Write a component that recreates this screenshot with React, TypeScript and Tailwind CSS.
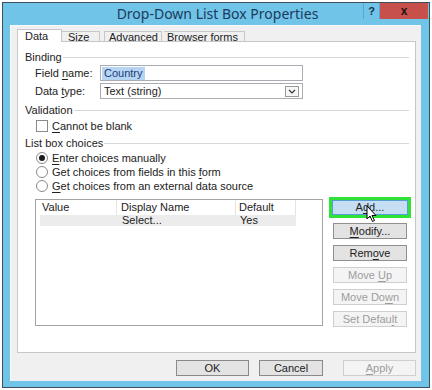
import React from "react";

const font = { fontFamily: '"Liberation Sans", Arial, sans-serif' };
const titleFont = { fontFamily: '"Noto Sans", "Open Sans", sans-serif' };

function U({ children }: { children: React.ReactNode }) {
  return <span className="underline underline-offset-2">{children}</span>;
}

function Section({ title }: { title: string }) {
  return (
    <div className="flex h-[14px] items-center pl-[7px] pr-[6px]">
      <span className="text-[11px] leading-none text-[#222]">{title}</span>
      <div className="ml-[1px] h-px flex-1 bg-[#d5d9dc]" />
    </div>
  );
}

function Radio({ checked, children }: { checked?: boolean; children: React.ReactNode }) {
  return (
    <div className="flex h-[14px] items-center pl-[18px]">
      <div className="flex h-[12px] w-[12px] items-center justify-center rounded-full border border-[#8a8a8a] bg-white">
        {checked && <div className="h-[6px] w-[6px] rounded-full bg-[#1a1a1a]" />}
      </div>
      <span className="ml-[4px] text-[11px] leading-none text-[#222]">{children}</span>
    </div>
  );
}

function SideButton({ children, disabled }: { children: React.ReactNode; disabled?: boolean }) {
  return (
    <div
      className={
        "flex h-[16px] w-[74px] items-center justify-center border text-[11px] leading-none " +
        (disabled
          ? "border-[#cfcfcf] bg-[#f4f4f4] text-[#9d9d9d]"
          : "border-[#8f8f8f] bg-[#e3e3e3] text-[#222]")
      }
    >
      {children}
    </div>
  );
}

export default function App() {
  return (
    <div className="h-[390px] w-[432px] bg-white pl-[2px] pt-[2px]" style={font}>
      <div className="flex h-[386px] w-[428px] flex-col border border-[#3e4f5c] bg-[#6fc4e8] pl-[7px] pr-[8px] pb-[6px]">
        {/* title bar */}
        <div className="relative flex h-[22px] items-center justify-center">
          <span className="pl-[4px] text-[14px] leading-none text-[#1d3a5c]" style={titleFont}>
            Drop-Down List Box Properties
          </span>
          <div className="absolute right-[-7px] top-0 flex h-[16px]">
            <div className="flex w-[17px] items-center justify-center border-x border-[#5aa8cf] text-[11px] font-bold text-[#1d2f4a]">
              ?
            </div>
            <div className="flex w-[48px] items-center justify-center bg-[#c8504b] text-[12px] font-bold text-[#1d1414]">
              x
            </div>
          </div>
        </div>

        {/* body */}
        <div className="flex flex-1 flex-col border-l border-t border-[#fafafa] bg-[#f0f0f0] pl-[6px] pr-[5px] pt-[3px]">
          {/* tabs */}
          <div className="flex h-[13px] items-end text-[11px] leading-none text-[#222]">
            <div className="relative z-10 flex h-[13px] w-[45px] items-center border-x border-t border-[#c7c7c7] bg-white pl-[7px]">
              Data
            </div>
            <div className="flex h-[11px] w-[38px] items-center border-r border-t border-[#c7c7c7] bg-[#f0f0f0] pl-[6px]">
              Size
            </div>
            <div className="ml-[4px] flex h-[11px] w-[58px] items-center border-x border-t border-[#c7c7c7] bg-[#f0f0f0] pl-[4px]">
              Advanced
            </div>
            <div className="ml-[2px] flex h-[11px] w-[81px] items-center border-r border-t border-[#c7c7c7] bg-[#f0f0f0] pl-[3px]">
              Browser forms
            </div>
          </div>

          {/* panel */}
          <div className="-mt-px flex h-[312px] flex-col border border-[#c7c7c7] bg-white">
            <div className="mt-[8px]">
              <Section title="Binding" />
            </div>
            <div className="mt-[1px] flex h-[16px] items-center pl-[17px] text-[11px] leading-none text-[#222]">
              <span className="w-[65px]">
                Field <U>n</U>ame:
              </span>
              <div className="flex h-[16px] w-[203px] items-center border border-[#a9adb3] bg-white pl-[1px]">
                <span className="bg-[#b7d4f3] px-[2px] py-[1px] text-[#1b3d7a]">Country</span>
              </div>
            </div>
            <div className="mt-[2px] flex h-[16px] items-center pl-[17px] text-[11px] leading-none text-[#222]">
              <span className="w-[65px]">
                Data <U>t</U>ype:
              </span>
              <div className="flex h-[16px] w-[203px] items-center justify-between border border-[#a9adb3] bg-white pl-[3px] pr-[3px]">
                <span>Text (string)</span>
                <div className="flex h-[11px] w-[14px] items-center justify-center border border-[#9a9a9a] bg-[#f6f6f6]">
                  <svg width="8" height="5" viewBox="0 0 8 5">
                    <path d="M1 1 L4 4 L7 1" fill="none" stroke="#333" strokeWidth="1.2" />
                  </svg>
                </div>
              </div>
            </div>
            <div className="mt-[4px]">
              <Section title="Validation" />
            </div>
            <div className="mt-[2px] flex h-[14px] items-center pl-[18px]">
              <div className="h-[12px] w-[12px] border border-[#8a8a8a] bg-white" />
              <span className="ml-[4px] text-[11px] leading-none text-[#222]">
                <U>C</U>annot be blank
              </span>
            </div>
            <div className="mt-[3px]">
              <Section title="List box choices" />
            </div>
            <div className="mt-[1px]">
              <Radio checked>
                <U>E</U>nter choices manually
              </Radio>
            </div>
            <Radio>
              Get choices from fields in this <U>f</U>orm
            </Radio>
            <Radio>
              <U>G</U>et choices from an external data source
            </Radio>

            {/* table + buttons */}
            <div className="mt-[4px] flex pl-[17px]">
              <div className="mt-[2px] h-[127px] w-[288px] border border-[#a3a3a3] bg-white pl-[4px] text-[11px] leading-none text-[#222]">
                <div className="flex h-[15px] items-center">
                  <div className="flex h-full w-[77px] items-center border-r border-[#e3e3e3] pl-[2px]">Value</div>
                  <div className="flex h-full w-[119px] items-center border-r border-[#e3e3e3] pl-[4px]">Display Name</div>
                  <div className="flex h-full w-[60px] items-center border-r border-[#e3e3e3] pl-[3px]">Default</div>
                </div>
                <div className="flex h-[11px] w-[256px] items-center bg-[#ececec]">
                  <div className="w-[77px]" />
                  <div className="w-[119px] pl-[5px]">Select...</div>
                  <div className="w-[60px] pl-[4px]">Yes</div>
                </div>
              </div>

              <div className="ml-[6px] flex flex-col items-center gap-[6px]">
                <div className="relative -mb-px border-[3px] border-[#2ee336]">
                  <div className="flex h-[15px] w-[76px] items-center justify-center border border-[#5b9bd5] bg-[#c6def4] text-[11px] leading-none text-[#222]">
                    A<U>d</U>d...
                  </div>
                  <svg className="absolute left-[34px] top-[5px]" width="12" height="18" viewBox="0 0 12 18">
                    <path d="M1 1 L1 14 L4 11 L6.5 16.5 L8.5 15.5 L6 10.5 L10 10.5 Z" fill="white" stroke="black" strokeWidth="1" />
                  </svg>
                </div>
                <SideButton>
                  <U>M</U>odify...
                </SideButton>
                <SideButton>
                  Rem<U>o</U>ve
                </SideButton>
                <SideButton disabled>
                  Move&nbsp;<U>U</U>p
                </SideButton>
                <SideButton disabled>
                  Move Do<U>w</U>n
                </SideButton>
                <SideButton disabled>
                  Set Defau<U>l</U>t
                </SideButton>
              </div>
            </div>
          </div>

          {/* bottom buttons */}
          <div className="mt-[7px] flex justify-end text-[11px] leading-none">
            <div className="flex h-[16px] w-[73px] items-center justify-center border border-[#8a8a8a] bg-[#e3e3e3] text-[#222]">
              OK
            </div>
            <div className="ml-[10px] flex h-[16px] w-[64px] items-center justify-center border border-[#8a8a8a] bg-[#e3e3e3] text-[#222]">
              Cancel
            </div>
            <div className="ml-[20px] flex h-[16px] w-[73px] items-center justify-center border border-[#cfcfcf] bg-[#f4f4f4] text-[#9d9d9d]">
              <U>A</U>pply
            </div>
          </div>
        </div>
      </div>
    </div>
  );
}
